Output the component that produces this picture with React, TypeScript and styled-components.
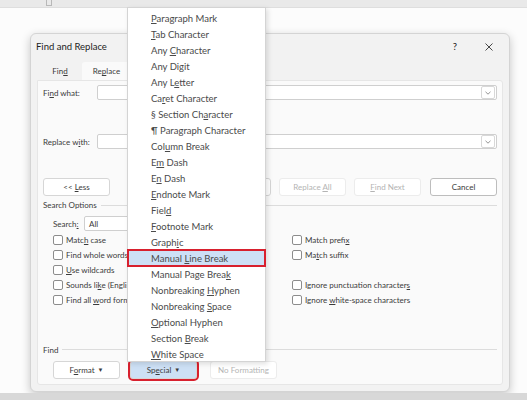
import React from "react";
import styled, { createGlobalStyle } from "styled-components";

const GlobalStyle = createGlobalStyle`
  html, body {
    margin: 0;
    padding: 0;
    background: #fcfcfc;
  }
  body {
    font-family: Lato, "Open Sans", sans-serif;
    color: #3a3a3a;
  }
`;

const Screen = styled.div`
  position: relative;
  width: 527px;
  height: 400px;
  overflow: hidden;
  background: #fcfcfc;
  display: flex;
  flex-direction: column;
`;

const TopStrip = styled.div`
  position: relative;
  flex: none;
  height: 7px;
  background: #e9e9e9;
  border-bottom: 1px solid #dedede;
  .tick {
    position: absolute;
    left: 46px;
    top: 0;
    width: 4px;
    height: 5px;
    border: 1px solid #b8b8b8;
    border-top: none;
  }
`;

const Desk = styled.div`
  flex: 1;
  padding: 25px 0 0 30px;
`;

const BottomStrip = styled.div`
  flex: none;
  height: 7px;
  background: #d8d8d8;
`;

const Dialog = styled.div`
  width: 478px;
  height: 357px;
  background: #f2f2f2;
  border: 1px solid #d4d4d4;
  border-radius: 6px;
  box-shadow: 0 3px 10px rgba(0, 0, 0, 0.22);
  display: flex;
  flex-direction: column;
`;

const TitleBar = styled.div`
  height: 25px;
  display: flex;
  align-items: center;
  padding: 0 0 0 5px;
  font-size: 9.5px;
  color: #222;
  .title {
    flex: 1;
  }
  .help {
    width: 34px;
    text-align: center;
    font-size: 9.5px;
  }
  .close {
    width: 34px;
    display: flex;
    justify-content: center;
    margin-right: 3px;
  }
`;

const TabRow = styled.div`
  display: flex;
  padding: 3px 0 0 9px;
  height: 18px;
`;

const Tab = styled.div<{ $active?: boolean }>`
  width: ${(p) => (p.$active ? 49 : 40)}px;
  margin-right: 2px;
  display: flex;
  align-items: center;
  justify-content: center;
  font-size: 8px;
  background: ${(p) => (p.$active ? "#fafafa" : "transparent")};
  border-radius: 3px 3px 0 0;
`;

const Panel = styled.div`
  flex: 1;
  margin: 0 6px 6px;
  background: #fafafa;
  border: 1px solid #e6e6e6;
  border-radius: 0 3px 3px 3px;
  padding: 0 5px 0 5px;
  display: flex;
  flex-direction: column;
  font-size: 8px;
`;

const FieldRow = styled.div<{ $top: number }>`
  display: flex;
  align-items: center;
  margin-top: ${(p) => p.$top}px;
  label {
    width: 54px;
    flex: none;
  }
`;

const ComboBox = styled.div<{ $width?: number }>`
  height: 13px;
  width: ${(p) => (p.$width ? `${p.$width}px` : "auto")};
  flex: ${(p) => (p.$width ? "none" : 1)};
  background: #fff;
  border: 1px solid #cfcfcf;
  border-radius: 2px;
  display: flex;
  align-items: center;
  .value {
    flex: 1;
    padding-left: 4px;
  }
  .arrow {
    width: 12px;
    height: 11px;
    margin-right: 1px;
    border: 1px solid #d8d8d8;
    border-radius: 2px;
    display: flex;
    align-items: center;
    justify-content: center;
  }
`;

const ButtonRow = styled.div<{ $top: number; $indent?: number }>`
  display: flex;
  align-items: center;
  margin-top: ${(p) => p.$top}px;
  padding-left: ${(p) => p.$indent ?? 0}px;
  .spacer {
    flex: 1;
  }
`;

const Button = styled.div<{
  $disabled?: boolean;
  $default?: boolean;
  $gap?: number;
  $hot?: boolean;
}>`
  width: 65px;
  height: 16px;
  margin-left: ${(p) => p.$gap ?? 0}px;
  display: flex;
  align-items: center;
  justify-content: center;
  font-size: 8px;
  border-radius: 3px;
  color: ${(p) => (p.$disabled ? "#b4b4b4" : "#3a3a3a")};
  background: ${(p) => (p.$hot ? "#cde0f5" : "#fff")};
  border: 1px solid
    ${(p) => (p.$default ? "#bdbdbd" : p.$disabled ? "#ececec" : "#d6d6d6")};
  outline: ${(p) => (p.$hot ? "2px solid #d8202e" : "none")};
  outline-offset: 0;
  .caret {
    font-size: 6px;
    margin-left: 3px;
  }
`;

const Legend = styled.div<{ $top: number }>`
  display: flex;
  align-items: center;
  height: 12px;
  margin-top: ${(p) => p.$top}px;
  &::after {
    content: "";
    flex: 1;
    margin-left: 4px;
    border-top: 1px solid #dcdcdc;
  }
`;

const SearchRow = styled.div`
  display: flex;
  align-items: center;
  margin-top: 5px;
  padding-left: 10px;
  label {
    width: 31px;
  }
`;

const OptionGrid = styled.div`
  display: grid;
  grid-template-columns: 239px 1fr;
  grid-template-rows: repeat(5, 14.8px);
  margin-top: 2px;
  padding-left: 10px;
`;

const Option = styled.div<{ $row: number; $col: number }>`
  grid-row: ${(p) => p.$row};
  grid-column: ${(p) => p.$col};
  display: flex;
  align-items: center;
  white-space: nowrap;
  overflow: hidden;
`;

const Box = styled.span`
  width: 8px;
  height: 8px;
  flex: none;
  margin-right: 3px;
  background: #fff;
  border: 1px solid #8c8c8c;
  border-radius: 2px;
`;

const Menu = styled.div`
  position: absolute;
  left: 127px;
  top: 7px;
  width: 137px;
  height: 351px;
  padding-top: 2px;
  background: #fff;
  border: 1px solid #d4d4d4;
  box-shadow: 2px 2px 5px rgba(0, 0, 0, 0.12);
`;

const MenuItem = styled.div<{ $active?: boolean }>`
  height: 16px;
  display: flex;
  align-items: center;
  padding-left: 23px;
  font-size: 9.5px;
  color: #4a4a4a;
  white-space: nowrap;
  background: ${(p) => (p.$active ? "#cde0f6" : "transparent")};
  outline: ${(p) => (p.$active ? "2px solid #d8202e" : "none")};
  outline-offset: -1px;
`;

const U = styled.span`
  text-decoration: underline;
  text-underline-offset: 1px;
`;

const label = (s: string) => {
  const i = s.indexOf("&");
  if (i < 0) return <span>{s}</span>;
  return (
    <span>
      {s.slice(0, i)}
      <U>{s[i + 1]}</U>
      {s.slice(i + 2)}
    </span>
  );
};

const Chevron = () => (
  <svg width="6" height="4" viewBox="0 0 6 4">
    <path d="M0.5 0.8 L3 3.2 L5.5 0.8" fill="none" stroke="#777" strokeWidth="0.8" />
  </svg>
);

const CloseIcon = () => (
  <svg width="8" height="8" viewBox="0 0 8 8">
    <path d="M0.5 0.5 L7.5 7.5 M7.5 0.5 L0.5 7.5" stroke="#333" strokeWidth="0.9" />
  </svg>
);

const specialItems = [
  "&Paragraph Mark",
  "&Tab Character",
  "Any &Character",
  "Any Di&git",
  "Any L&etter",
  "Ca&ret Character",
  "§ Section Ch&aracter",
  "¶ Paragraph Character",
  "Col&umn Break",
  "E&m Dash",
  "E&n Dash",
  "&Endnote Mark",
  "Fiel&d",
  "&Footnote Mark",
  "Graph&ic",
  "Manual &Line Break",
  "Manual Page Brea&k",
  "Nonbreaking &Hyphen",
  "Nonbreaking &Space",
  "&Optional Hyphen",
  "Section &Break",
  "&White Space",
];

const options: [string, number, number][] = [
  ["Matc&h case", 1, 1],
  ["Find whole words onl&y", 2, 1],
  ["&Use wildcards", 3, 1],
  ["Sounds li&ke (English)", 4, 1],
  ["Find all &word forms (English)", 5, 1],
  ["Match prefi&x", 1, 2],
  ["Ma&tch suffix", 2, 2],
  ["Ignore punctuation character&s", 4, 2],
  ["Ignore &white-space characters", 5, 2],
];

export default function App() {
  return (
    <>
      <GlobalStyle />
      <Screen>
        <TopStrip>
          <span className="tick" />
        </TopStrip>
        <Desk>
          <Dialog>
            <TitleBar>
              <span className="title">Find and Replace</span>
              <span className="help">?</span>
              <span className="close">
                <CloseIcon />
              </span>
            </TitleBar>
            <TabRow>
              <Tab>{label("Fin&d")}</Tab>
              <Tab $active>{label("Re&place")}</Tab>
            </TabRow>
            <Panel>
              <FieldRow $top={4}>
                <label>{label("Fi&nd what:")}</label>
                <ComboBox>
                  <span className="value" />
                  <span className="arrow">
                    <Chevron />
                  </span>
                </ComboBox>
              </FieldRow>
              <FieldRow $top={34}>
                <label>{label("Replace w&ith:")}</label>
                <ComboBox>
                  <span className="value" />
                  <span className="arrow">
                    <Chevron />
                  </span>
                </ComboBox>
              </FieldRow>
              <ButtonRow $top={29}>
                <Button>{label("<< &Less")}</Button>
                <span className="spacer" />
                <Button $gap={0}>{label("&Replace")}</Button>
                <Button $disabled $gap={8}>
                  {label("Replace &All")}
                </Button>
                <Button $disabled $gap={8}>
                  {label("&Find Next")}
                </Button>
                <Button $default $gap={9}>
                  Cancel
                </Button>
              </ButtonRow>
              <Legend $top={3}>Search Options</Legend>
              <SearchRow>
                <label>{label("Search&:")}</label>
                <ComboBox $width={90}>
                  <span className="value">All</span>
                  <span className="arrow">
                    <Chevron />
                  </span>
                </ComboBox>
              </SearchRow>
              <OptionGrid>
                {options.map(([text, row, col]) => (
                  <Option key={text} $row={row} $col={col}>
                    <Box />
                    {label(text)}
                  </Option>
                ))}
              </OptionGrid>
              <Legend $top={37}>Find</Legend>
              <ButtonRow $top={5} $indent={10}>
                <Button>
                  {label("F&ormat")}
                  <span className="caret">▼</span>
                </Button>
                <Button $hot $gap={10}>
                  {label("Sp&ecial")}
                  <span className="caret">▼</span>
                </Button>
                <Button $disabled $gap={13}>
                  No Formatting
                </Button>
              </ButtonRow>
            </Panel>
          </Dialog>
        </Desk>
        <BottomStrip />
        <Menu>
          {specialItems.map((s) => (
            <MenuItem key={s} $active={s === "Manual &Line Break"}>
              {label(s)}
            </MenuItem>
          ))}
        </Menu>
      </Screen>
    </>
  );
}
